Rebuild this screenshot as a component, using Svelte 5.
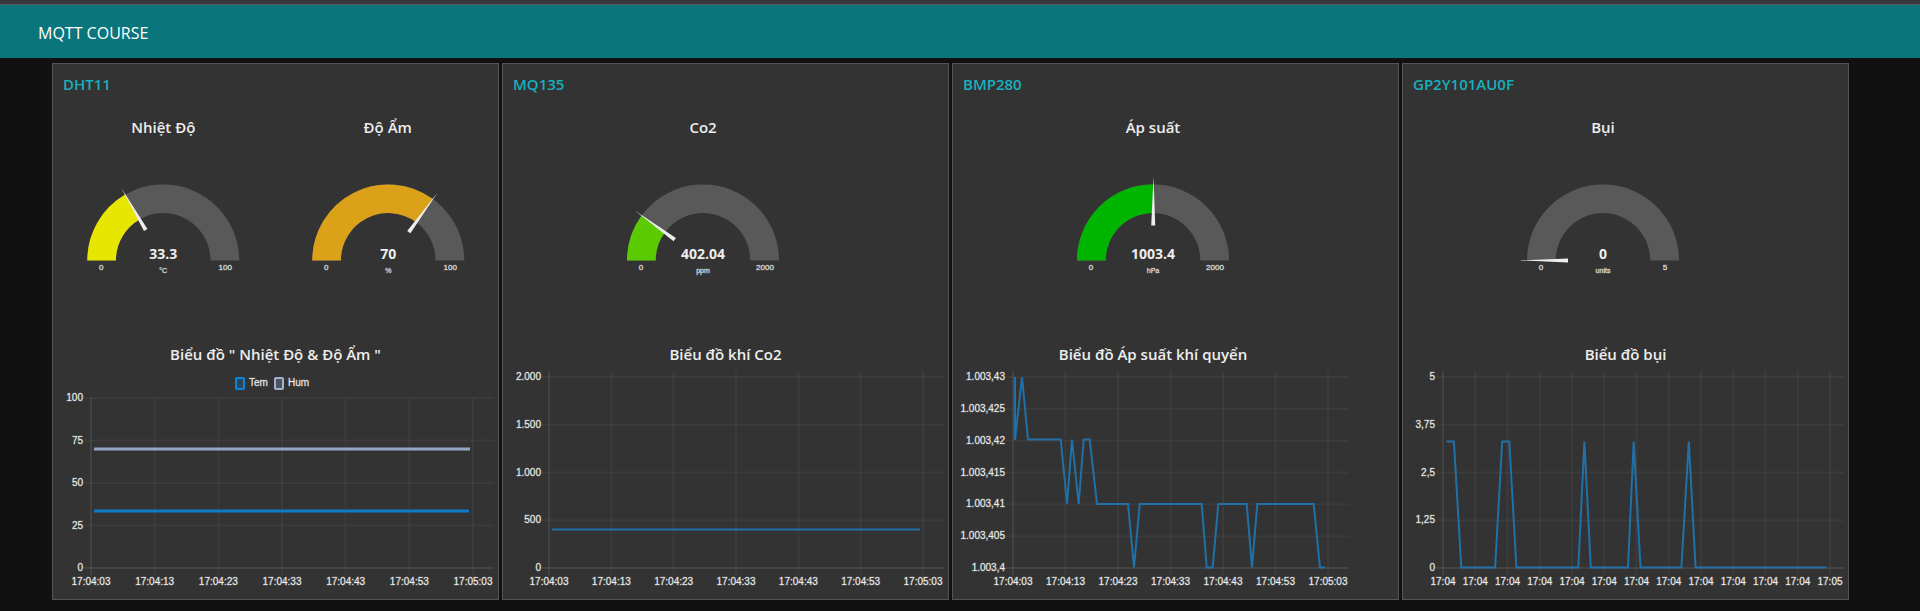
<script>
  const steps = (from, to, count) =>
    Array.from({ length: count }, (_, i) => from + ((to - from) * i) / (count - 1));

  const seconds = ['17:04:03', '17:04:13', '17:04:23', '17:04:33', '17:04:43', '17:04:53', '17:05:03'];
  const minutes = [...Array(12).fill('17:04'), '17:05'];
  const BLUE = '#1f77b4';

  const cards = [
    {
      name: 'DHT11',
      gauges: [
        { title: 'Nhiệt Độ', value: '33.3', ratio: 0.333, max: '100', unit: '°C', color: '#e6e600' },
        { title: 'Độ Ẩm', value: '70', ratio: 0.7, max: '100', unit: '%', color: '#dba119' }
      ],
      chart: {
        title: 'Biểu đồ " Nhiệt Độ & Độ Ẩm "',
        legend: [
          { label: 'Tem', x: 183, color: '#0b84d8' },
          { label: 'Hum', x: 222, color: '#9fb3d6' }
        ],
        left: 38, last: 420, right: 441, top: 28, start: 28,
        yLabels: ['100', '75', '50', '25', '0'],
        xLabels: seconds,
        series: [
          { color: '#9fb3d6', points: '41,79 417,79' },
          { color: '#0b84d8', points: '41,141 416,141' }
        ]
      }
    },
    {
      name: 'MQ135',
      gauges: [{ title: 'Co2', value: '402.04', ratio: 0.201, max: '2000', unit: 'ppm', color: '#5cca00' }],
      chart: {
        title: 'Biểu đồ khí Co2',
        left: 46, last: 420, right: 441, top: 7, start: 1,
        yLabels: ['2.000', '1.500', '1.000', '500', '0'],
        xLabels: seconds,
        series: [{ color: BLUE, points: '49,159.5 417,159.5' }]
      }
    },
    {
      name: 'BMP280',
      gauges: [{ title: 'Áp suất', value: '1003.4', ratio: 0.502, max: '2000', unit: 'hPa', color: '#00b500' }],
      chart: {
        title: 'Biểu đồ Áp suất khí quyển',
        narrow: true,
        left: 60, last: 375, right: 396, top: 7, start: 1,
        yLabels: ['1.003,43', '1.003,425', '1.003,42', '1.003,415', '1.003,41', '1.003,405', '1.003,4'],
        xLabels: seconds,
        series: [
          {
            color: BLUE,
            points:
              '62,7 62,70 69,7 75,69.5 107.7,69.5 114,134 119,69.5 125.7,134 130.7,69.5 136.7,69.5 144,134 175,134 181,197.5 186.7,134 248.7,134 253.7,197.5 259.7,197.5 265.3,134 293.7,134 299,197.5 304.3,134 360.7,134 367,197.5 372,197.5'
          }
        ]
      }
    },
    {
      name: 'GP2Y101AU0F',
      gauges: [{ title: 'Bụi', value: '0', ratio: 0, max: '5', unit: 'units', color: '#00b500' }],
      chart: {
        title: 'Biểu đồ bụi',
        left: 40, last: 427, right: 441, top: 7, start: 1,
        yLabels: ['5', '3,75', '2,5', '1,25', '0'],
        xLabels: minutes,
        series: [
          {
            color: BLUE,
            points:
              '43.5,71.5 50.9,71.5 58.3,197.5 92.1,197.5 99.2,71.5 106.3,71.5 113.4,197.5 175.3,197.5 181.4,71.5 187.8,197.5 225,197.5 230.7,71.5 237.5,197.5 278.4,197.5 285.8,71.5 292.6,197.5 423.8,197.5'
          }
        ]
      }
    }
  ];

  // Ring segment of the half-circle dial, swept clockwise from the left end.
  const CX = 112, CY = 110.4, OUTER = 76, INNER = 47.3;
  function arc(ratio) {
    const a = Math.PI * (1 - ratio);
    const c = Math.cos(a), s = Math.sin(a);
    return `M${CX - OUTER} ${CY} A${OUTER} ${OUTER} 0 0 1 ${CX + OUTER * c} ${CY - OUTER * s} L${CX + INNER * c} ${CY - INNER * s} A${INNER} ${INNER} 0 0 0 ${CX - INNER} ${CY} Z`;
  }
</script>

<div class="strip"></div>
<header>
  <h1>MQTT COURSE</h1>
</header>
<main>
  {#each cards as card}
    <section class="card">
      <h2>{card.name}</h2>
      <div class="gauges" class:single={card.gauges.length === 1}>
        {#each card.gauges as g}
          <div class="gauge">
            <h3>{g.title}</h3>
            <svg viewBox="0 0 224 190" role="img" aria-label={g.title}>
              <path d={arc(1)} fill="#595959" />
              {#if g.ratio > 0}<path d={arc(g.ratio)} fill={g.color} />{/if}
              <path
                d="M28 110.4 L77 108.4 V112.4 Z"
                fill="#eee"
                transform="rotate({g.ratio * 180} {CX} {CY})"
              />
              <text class="value" x={CX} y="109">{g.value}</text>
              <text class="bound" x="50" y="120">0</text>
              <text class="bound" x="174" y="120">{g.max}</text>
              <text class="unit" x={CX} y="123">{g.unit}</text>
            </svg>
          </div>
        {/each}
      </div>
      <h3 class="chart-title" class:narrow={card.chart.narrow}>{card.chart.title}</h3>
      <svg class="chart" viewBox="0 0 445 229" role="img" aria-label={card.chart.title}>
        {#each steps(card.chart.top, 198, card.chart.yLabels.length) as y, i}
          <line class="grid" class:axis={i === card.chart.yLabels.length - 1} x1={card.chart.left - 7} x2={card.chart.right} y1={y} y2={y} />
          <text class="tick end" x={card.chart.left - 8} y={y + 3}>{card.chart.yLabels[i]}</text>
        {/each}
        {#each steps(card.chart.left, card.chart.last, card.chart.xLabels.length) as x, i}
          <line class="grid" class:axis={i === 0} x1={x} x2={x} y1={card.chart.start} y2="205" />
          <text class="tick mid" {x} y="215">{card.chart.xLabels[i]}</text>
        {/each}
        {#each card.chart.series as s}
          <polyline class:bold={card.chart.legend} points={s.points} stroke={s.color} />
        {/each}
        {#each card.chart.legend ?? [] as item}
          <rect x={item.x} y="8" width="8" height="11" rx="1" fill={item.color} fill-opacity="0.25" stroke={item.color} stroke-width="2" />
          <text class="tick" x={item.x + 13} y="16">{item.label}</text>
        {/each}
      </svg>
    </section>
  {/each}
</main>

<style>
  :global(body) {
    margin: 0;
    background: #111;
    color: #eee;
    font-family: 'Segoe UI', 'Open Sans', 'Noto Sans', sans-serif;
  }
  h1, h2, h3 {
    margin: 0;
  }
  .strip {
    height: 4px;
    background: #38383d;
    border-bottom: 1px solid #5c5c60;
  }
  header {
    padding: 4px 38px 0;
    background: #0a757a;
  }
  h1 {
    font-size: 16px;
    font-weight: 400;
    line-height: 49px;
    color: #fff;
  }
  main {
    display: grid;
    grid-template-columns: repeat(4, 1fr);
    gap: 3px;
    padding: 5px 71px 11px 52px;
  }
  .card {
    min-width: 0;
    background: #333;
    border: 1px solid #555;
  }
  h2 {
    padding: 0 10px 2px;
    font-size: 15px;
    font-weight: 600;
    line-height: 40px;
    color: #17b0be;
  }
  h3 {
    padding-bottom: 2px;
    font-size: 15px;
    font-weight: 600;
    line-height: 42px;
    text-align: center;
  }
  .gauges {
    display: grid;
    grid-template-columns: 1fr 1fr;
    margin: 0 -2px;
  }
  .gauges.single {
    grid-template-columns: 1fr;
    margin: 0 45px 0 0;
  }
  .gauge svg {
    display: block;
    width: 100%;
    height: 190px;
  }
  .gauge text {
    text-anchor: middle;
    fill: #eee;
  }
  .gauge .value {
    font-size: 14px;
    font-weight: 700;
  }
  .gauge .bound {
    font: 8px 'Liberation Sans', Arial, sans-serif;
  }
  .gauge .unit {
    font: 7px 'Liberation Sans', Arial, sans-serif;
  }
  .chart-title {
    line-height: 28px;
  }
  .chart-title.narrow {
    margin-right: 45px;
  }
  .chart {
    display: block;
    width: 100%;
  }
  .grid {
    stroke: #fff;
    stroke-opacity: 0.04;
    stroke-width: 2;
  }
  .grid.axis {
    stroke-opacity: 0.08;
  }
  .tick,
  .gauge .bound,
  .gauge .unit {
    stroke: #eee;
    stroke-opacity: 0.25;
    stroke-width: 1px;
  }
  .tick {
    font: 10px 'Liberation Sans', Arial, sans-serif;
    fill: #eee;
  }
  .mid {
    text-anchor: middle;
  }
  .end {
    text-anchor: end;
  }
  polyline {
    fill: none;
    stroke-width: 2;
    stroke-opacity: 0.9;
  }
  polyline.bold {
    stroke-width: 3;
  }
</style>
